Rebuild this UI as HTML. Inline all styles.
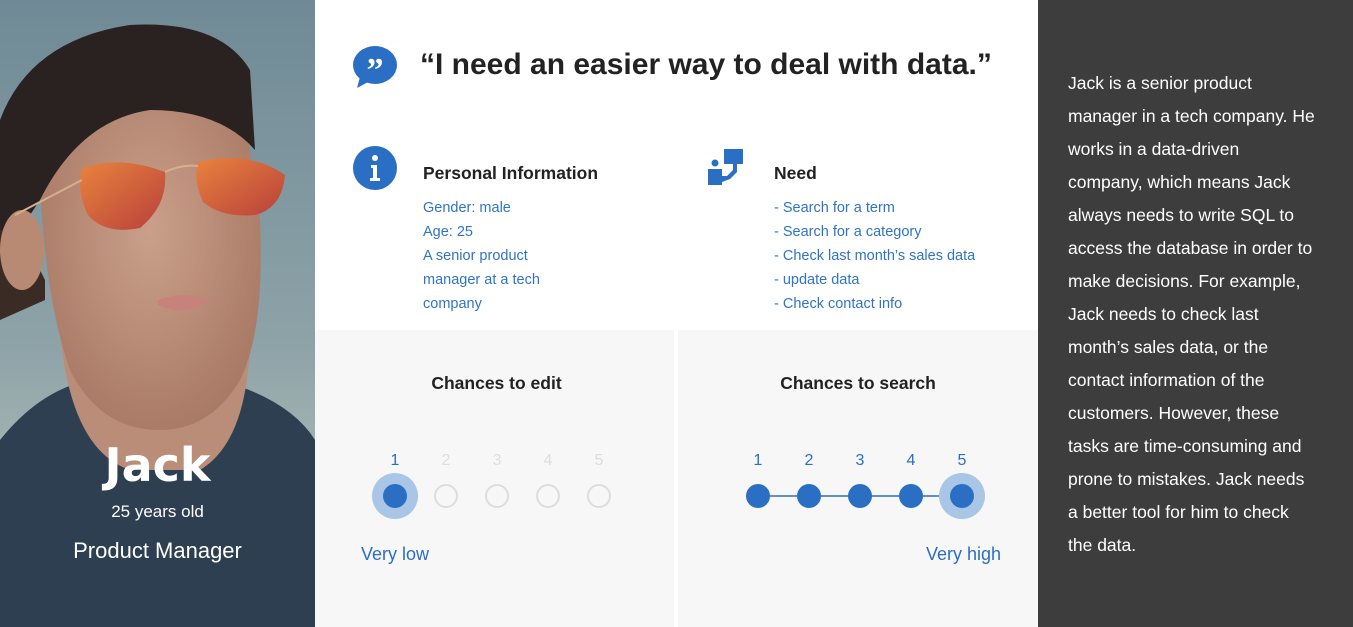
<!DOCTYPE html>
<html><head><meta charset="utf-8"><style>
*{margin:0;padding:0;box-sizing:border-box}
body{width:1353px;height:627px;overflow:hidden;background:#fff;font-family:"Liberation Sans",sans-serif;position:relative}
.abs{position:absolute}
.left{left:0;top:0;width:315px;height:627px;overflow:hidden}
.right{left:1038px;top:0;width:315px;height:627px;background:#3d3d3d;color:#fff;font-size:17.5px;line-height:33px;padding:67px 0 0 30px;white-space:nowrap}
.blue{color:#2a6fc4}
.h{font-weight:bold;font-size:17.5px;color:#222}
.list{font-size:14.5px;line-height:24px;color:#2f74c6}
.panel{top:330px;height:297px;background:#f7f7f7}
.num{font-size:16px;position:absolute;width:20px;text-align:center}
</style></head><body>
<div class="abs left">
<svg width="315" height="627" viewBox="0 0 315 627">
<defs>
<linearGradient id="bg" x1="0" y1="0" x2="0" y2="1"><stop offset="0" stop-color="#6f8a96"/><stop offset="0.55" stop-color="#8ea3a8"/><stop offset="0.7" stop-color="#9fb0b0"/><stop offset="1" stop-color="#5d7074"/></linearGradient>
<radialGradient id="skin" cx="0.5" cy="0.45" r="0.6"><stop offset="0" stop-color="#caa08a"/><stop offset="1" stop-color="#a77864"/></radialGradient>
<linearGradient id="lens" x1="0" y1="0" x2="1" y2="1"><stop offset="0" stop-color="#e8833e"/><stop offset="1" stop-color="#b8403a"/></linearGradient>
</defs>
<rect width="315" height="627" fill="url(#bg)"/>
<path d="M0 440 Q40 390 90 380 L220 380 Q290 400 315 440 L315 627 L0 627Z" fill="#2e3f52"/>
<path d="M60 330 Q70 450 130 470 L200 470 Q250 440 250 330 L250 200 L60 200Z" fill="#b98d78"/>
<path d="M40 180 Q40 90 120 70 Q200 60 245 120 L260 220 Q265 330 240 380 Q210 430 160 430 Q100 430 70 370 Q45 300 40 180Z" fill="url(#skin)"/>
<path d="M0 120 Q30 40 130 25 Q220 20 250 70 L255 150 Q220 110 150 110 Q80 120 40 200 L20 230 L0 240Z" fill="#2a2220"/>
<path d="M0 230 L20 230 Q35 260 45 280 L45 300 L0 320Z" fill="#3a2b25"/>
<ellipse cx="22" cy="250" rx="22" ry="40" fill="#b88a74"/>
<path d="M82 168 Q120 155 165 172 Q168 205 140 228 Q105 235 88 215 Q76 190 82 168Z" fill="url(#lens)"/>
<path d="M198 162 Q250 150 285 175 Q282 208 255 215 Q222 218 203 202 Q193 180 198 162Z" fill="url(#lens)"/>
<path d="M15 215 L82 180 M165 172 Q182 164 198 166" stroke="#d4b18a" stroke-width="2" fill="none"/>
<path d="M158 300 Q185 290 210 300 Q185 318 158 305Z" fill="#c7837b"/>
</svg>
<div class="abs" style="left:0;width:315px;top:432px;text-align:center;color:#fff">
<div style="font-weight:bold;line-height:66px;font-family:'DejaVu Sans',sans-serif;font-size:46px">Jack</div>
<div style="font-size:17px;margin-top:4px">25 years old</div>
<div style="font-size:22px;margin-top:16px">Product Manager</div>
</div>
</div>

<svg class="abs" style="left:352px;top:45px" width="46" height="44" viewBox="0 0 46 44"><ellipse cx="23" cy="20" rx="22" ry="19" fill="#2a6fc4"/><path d="M8 32 L5 43 L18 36Z" fill="#2a6fc4"/><text x="23" y="36" text-anchor="middle" fill="#fff" font-size="34" font-weight="bold" font-family="Liberation Serif">”</text></svg>
<div class="abs" style="left:420px;top:48px;font-weight:bold;color:#222;font-size:30px">“I need an easier way to deal with data.”</div>

<svg class="abs" style="left:353px;top:146px" width="44" height="44"><circle cx="22" cy="22" r="22" fill="#2a6fc4"/><circle cx="22" cy="12" r="3" fill="#fff"/><path d="M18 19 h6 v13 h3 v3 h-10 v-3 h3 v-10 h-2z" fill="#fff"/></svg>
<div class="abs h" style="left:423px;top:163px">Personal Information</div>
<div class="abs list" style="left:423px;top:196px">Gender: male<br>Age: 25<br>A senior product<br>manager at a tech<br>company</div>

<svg class="abs" style="left:707px;top:149px" width="38" height="38"><rect x="17" y="0" width="19" height="15" fill="#2a6fc4"/><path d="M26 15 v6 l-6 6 h-5 v-6 h-14 v15 h14 v-3 l8-3 l7-7 v-8z" fill="#2a6fc4"/><circle cx="8" cy="14" r="3.5" fill="#2a6fc4"/><rect x="1" y="20" width="14" height="16" fill="#2a6fc4"/></svg>
<div class="abs h" style="left:774px;top:163px">Need</div>
<div class="abs list" style="left:774px;top:196px">- Search for a term<br>- Search for a category<br>- Check last month’s sales data<br>- update data<br>- Check contact info</div>

<div class="abs panel" style="left:315px;width:359px"></div>
<div class="abs panel" style="left:678px;width:360px"></div>

<div class="abs h" style="left:315px;width:363px;top:373px;text-align:center">Chances to edit</div>
<div class="num blue" style="left:385px;top:452px">1</div>
<div class="num" style="left:436px;top:452px;color:#ddd">2</div>
<div class="num" style="left:487px;top:452px;color:#ddd">3</div>
<div class="num" style="left:538px;top:452px;color:#ddd">4</div>
<div class="num" style="left:589px;top:452px;color:#ddd">5</div>
<svg class="abs" style="left:360px;top:470px" width="260" height="52">
<circle cx="35" cy="26" r="23" fill="#a9c6e6"/><circle cx="35" cy="26" r="12" fill="#2a6fc4"/>
<circle cx="86" cy="26" r="11" fill="none" stroke="#ddd" stroke-width="2"/>
<circle cx="137" cy="26" r="11" fill="none" stroke="#ddd" stroke-width="2"/>
<circle cx="188" cy="26" r="11" fill="none" stroke="#ddd" stroke-width="2"/>
<circle cx="239" cy="26" r="11" fill="none" stroke="#ddd" stroke-width="2"/>
</svg>
<div class="abs blue" style="left:361px;top:544px;font-size:18px">Very low</div>

<div class="abs h" style="left:678px;width:360px;top:373px;text-align:center">Chances to search</div>
<div class="num blue" style="left:748px;top:452px">1</div>
<div class="num blue" style="left:799px;top:452px">2</div>
<div class="num blue" style="left:850px;top:452px">3</div>
<div class="num blue" style="left:901px;top:452px">4</div>
<div class="num blue" style="left:952px;top:452px">5</div>
<svg class="abs" style="left:730px;top:470px" width="270" height="52">
<line x1="28" y1="26" x2="232" y2="26" stroke="#2a6fc4" stroke-width="1.5"/>
<circle cx="232" cy="26" r="23" fill="#a9c6e6"/>
<circle cx="28" cy="26" r="12" fill="#2a6fc4"/><circle cx="79" cy="26" r="12" fill="#2a6fc4"/><circle cx="130" cy="26" r="12" fill="#2a6fc4"/><circle cx="181" cy="26" r="12" fill="#2a6fc4"/><circle cx="232" cy="26" r="12" fill="#2a6fc4"/>
</svg>
<div class="abs blue" style="left:926px;top:544px;font-size:18px">Very high</div>

<div class="abs right">Jack is a senior product<br>manager in a tech company. He<br>works in a data-driven<br>company, which means Jack<br>always needs to write SQL to<br>access the database in order to<br>make decisions. For example,<br>Jack needs to check last<br>month’s sales data, or the<br>contact information of the<br>customers. However, these<br>tasks are time-consuming and<br>prone to mistakes. Jack needs<br>a better tool for him to check<br>the data.</div>
</body></html>
